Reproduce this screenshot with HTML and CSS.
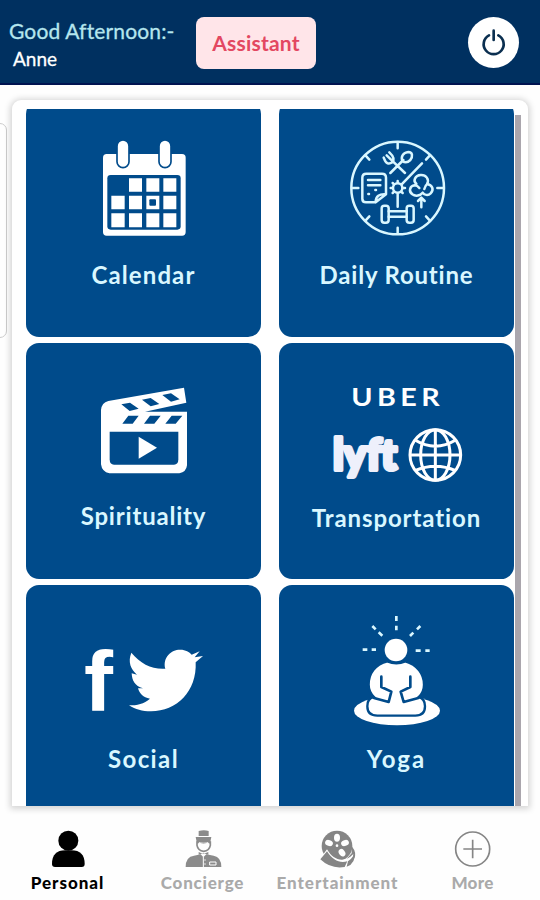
FILE: index.html
```html
<!DOCTYPE html>
<html lang="en">
<head>
  <meta charset="UTF-8">
  <meta name="viewport" content="width=device-width, initial-scale=1.0">
  <title>Personal</title>
  <link rel="stylesheet" href="styles.css">
</head>
<body>
<header class="header">
  <div class="greeting">
    <div class="hello">Good Afternoon:-</div>
    <div class="name">Anne</div>
  </div>
  <button class="assistant">Assistant</button>
  <button class="power" aria-label="Log out">
    <svg width="51" height="51" viewBox="0 0 153 153" fill="none" stroke="#0b2f50" stroke-width="8" stroke-linecap="round">
      <path d="M63 55 A30 30 0 1 0 91 55 M77 41 V69"/>
    </svg>
  </button>
</header>

<main class="main">
  <div class="side-card"></div>
  <div class="panel">
    <div class="scroll">
      <div class="grid">
        <div class="tile">
          <svg class="icon" viewBox="-162 -57 705 465">
            <rect x="69" y="102" width="248" height="245" rx="11"/>
            <rect class="cut" x="82" y="165" width="220" height="164" rx="10"/>
            <g class="pin">
              <rect x="111" y="60" width="36" height="83" rx="18"/>
              <rect x="237" y="60" width="36" height="83" rx="18"/>
            </g>
            <path d="M147 175h39v40h-39z M199 175h39v40h-39z M250 175h39v40h-39z M94 227h40v41H94z M147 227h39v41h-39z M199 227h39v41h-39z M250 227h39v41h-39z M94 280h40v42H94z M147 280h39v42h-39z M199 280h39v42h-39z M250 280h39v42h-39z"/>
            <rect class="cut" x="208" y="238" width="20" height="19" rx="3"/>
          </svg>
          <span class="label calendar">Calendar</span>
        </div>

        <div class="tile">
          <svg class="icon line" viewBox="-93 -57 705 465">
            <circle cx="263" cy="204" r="139"/>
            <path d="M263 68v17 M263 323v17 M127 204h18 M382 204h18 M167 107l11 12 M359 107l-11 12 M167 301l11-12 M359 301l-11-12"/>
            <!-- fork and spoon -->
            <path d="M241 159l39-39 M285 159l-45-43 M222 115c6 17 15 19 25 12c7-9 3-19-9-30 M222 115l-1-2 M230 106l13 13"/>
            <path d="M277 123c-5-13 2-25 18-27c13 0 14 13 6 24c-8 8-16 9-24 3z"/>
            <!-- notes -->
            <path d="M197 247h-29q-11 0-11-11v-63q0-12 12-12h47q12 0 12 12v50l-31 24c0-18 11-26 31-24 M174 180h37 M174 196h37 M175 222h2 M196 210h2"/>
            <!-- clock hands -->
            <circle cx="263" cy="204" r="14"/>
            <path d="M275 193l61-63 M263 221v39 M263 183v5 M242 204h5 M279 204h6 M248 189l4 4 M248 219l4-4 M278 219l-4-4"/>
            <!-- tree -->
            <path d="M319 191c-11-8-4-25 13-26c16-1 27 13 19 27c16 2 22 17 11 28c-8 8-19 5-24-2c-7 9-21 12-31 5c-12-9-8-25 7-27c4 0 10 3 14 8 M343 207c2-7 5-12 8-14"/>
            <path d="M334 262v-27 M324 243l10-10 10 10"/>
            <!-- dumbbell -->
            <rect x="215" y="257" width="21" height="51" rx="8"/>
            <rect x="290" y="257" width="21" height="51" rx="8"/>
            <path d="M236 274h54 M236 290h54"/>
          </svg>
          <span class="label routine">Daily Routine</span>
        </div>

        <div class="tile">
          <svg class="icon" viewBox="-132 -81 705 465">
            <path d="M115 93L342 53l7 45-124 27h126v161q-2 20-23 24H118q-22-4-25-27V120q2-22 22-27z"/>
            <path class="cut" d="M154 103l26-5 26 18-27 7z M216 89l26-5 26 18-26 7z M277 75l26-5 26 18-26 7z M175 137h31l-18 24h-31z M240 137h32l-19 24h-31z M305 137h32l-20 24h-31z"/>
            <path class="cut" d="M119 185h206v83q0 16-13 16H132q-13 0-13-16z"/>
            <path d="M206 200l55 33-55 33z"/>
          </svg>
          <span class="label spirituality">Spirituality</span>
        </div>

        <div class="tile">
          <svg class="icon" viewBox="-63 -81 705 465">
            <text class="uber" x="154" y="107" textLength="278" lengthAdjust="spacingAndGlyphs">UBER</text>
            <text class="lyft" x="99" y="299" textLength="192" lengthAdjust="spacingAndGlyphs">lyft</text>
            <g fill="none" stroke="#fff" stroke-width="9">
              <circle cx="406" cy="255" r="76"/>
              <ellipse cx="406" cy="255" rx="44" ry="76"/>
              <path d="M406 179v152 M330 255h152 M345 210q61 37 122 0 M345 302q61-27 122 0"/>
            </g>
          </svg>
          <span class="label transportation">Transportation</span>
        </div>

        <div class="tile">
          <svg class="icon" viewBox="-132 -135 705 465">
            <text class="facebook" x="42" y="244" textLength="87" lengthAdjust="spacingAndGlyphs">f</text>
            <path d="M184 68c27 33 63 51 102 48c-9-35 20-58 45-57c16 0 27 7 34 15l24-10-15 18 25-4-22 19c4 87-57 147-134 147c-27 0-46-6-66-18c24 0 45-4 63-20c-21-3-31-15-36-31h15c-25-7-33-24-34-45l16 4c-19-17-28-38-17-66z"/>
          </svg>
          <span class="label social">Social</span>
        </div>

        <div class="tile">
          <svg class="icon" viewBox="-153 -45 705 465">
            <g class="rays">
              <path d="M199 48v15 M199 77v14 M127 78l10 10 M146 97l11 10 M271 78l-10 10 M250 98l-10 10 M98 149h14 M125 149h13 M257 152h15 M286 152h13"/>
            </g>
            <circle cx="198" cy="150" r="34"/>
            <ellipse cx="201" cy="332" rx="129" ry="44"/>
            <path class="edge" d="M172 184q27 12 54 0c36 10 56 39 56 70c0 20-6 28-16 37c17 4 19 16 19 28c0 20-12 28-29 28H142c-19 0-30-10-30-28c0-14 5-26 20-28c-10-10-16-20-16-37c0-34 20-61 56-70z"/>
            <path class="fold" d="M154 230v31l30 14-8 31-44-12 M241 230v31l-29 14 9 31 44-12"/>
          </svg>
          <span class="label yoga">Yoga</span>
        </div>
      </div>
      <div class="scrollbar"></div>
    </div>
  </div>
</main>

<nav class="nav">
  <a class="nav-item active">
    <svg width="40" height="40" viewBox="0 0 120 120" fill="currentColor">
      <circle cx="61" cy="32" r="30"/>
      <path d="M12 102q0-41 40-41h18q40 0 40 41 0 9-9 9H21q-9 0-9-9z"/>
    </svg>
    <span class="nav-personal">Personal</span>
  </a>
  <a class="nav-item">
    <svg width="40" height="40" viewBox="0 0 120 120" fill="#8b8b8b">
      <path d="M47 3q16-5 30 0v15H47z M38 21h47l-3 15H41z"/>
      <path d="M42 34v12c2 11 10 17 20 18c10-1 18-7 20-18V34" fill="none" stroke="#8b8b8b" stroke-width="5"/>
      <path d="M42 34q19 13 40 0v7q-20-8-40 0z M47 66l14 6 15-6v8l-15-4-14 4z"/>
      <path d="M8 111q0-31 25-34l20-4 8 9 9-9 22 4q23 4 23 34z"/>
      <path d="M61 81v30 M80 96h19v9H80z" stroke="#fff" stroke-width="3" fill="none"/>
      <circle cx="66" cy="90" r="2" fill="#fff"/>
      <circle cx="66" cy="102" r="2" fill="#fff"/>
    </svg>
    <span class="nav-concierge">Concierge</span>
  </a>
  <a class="nav-item">
    <svg width="40" height="40" viewBox="0 0 120 120" fill="#858585">
      <circle cx="57" cy="48" r="46"/>
      <path d="M101 48q17 22 7 38l-12 14-10-14 15-16z"/>
      <g fill="#fff">
        <ellipse cx="57" cy="23" rx="9" ry="12"/>
        <ellipse cx="81" cy="39" rx="12" ry="9" transform="rotate(-18 81 39)"/>
        <ellipse cx="72" cy="68" rx="9" ry="12" transform="rotate(-36 72 68)"/>
        <ellipse cx="33" cy="39" rx="12" ry="9" transform="rotate(18 33 39)"/>
        <circle cx="57" cy="47" r="4"/>
      </g>
      <path d="M5 88L27 58C44 88 72 98 97 80l9-8q0 24-20 37Q38 122 5 88z" fill="#fff"/>
      <path d="M7 88L27 64C44 92 66 100 88 94l-8 17Q38 118 7 88z"/>
      <path d="M86 110q28-9 24-44-4 18-20 28z"/>
    </svg>
    <span class="nav-entertainment">Entertainment</span>
  </a>
  <a class="nav-item">
    <svg width="40" height="40" viewBox="0 0 120 120" fill="none" stroke="#858585" stroke-width="5">
      <circle cx="59" cy="57" r="51"/>
      <path d="M59 29v56 M31 57h56"/>
    </svg>
    <span class="nav-more">More</span>
  </a>
</nav>
</body>
</html>
```
FILE: styles.css
```css
:root {
  --navy: #003060;
  --blue: #004b8b;
  --pale: #d9f7ff;
}

* {
  box-sizing: border-box;
}

body {
  margin: 0;
  height: 900px;
  display: flex;
  flex-direction: column;
  overflow: hidden;
  background: #fefefe;
  font-family: Lato, 'Liberation Sans', sans-serif;
}

button {
  border: none;
  padding: 0;
  font-family: inherit;
}

.header {
  height: 85px;
  flex: none;
  display: flex;
  align-items: flex-start;
  padding: 17px 21px 0 9px;
  background: var(--navy);
  border-bottom: 2px solid #001350;
}

.greeting {
  width: 187px;
  white-space: nowrap;
}

.hello {
  color: #b5e6ee;
  font-size: 21px;
  line-height: 28px;
  letter-spacing: 0.15px;
  -webkit-text-stroke: 0.3px #b5e6ee;
}

.name {
  padding-left: 4px;
  color: #fff;
  font-size: 19px;
  line-height: 28px;
  -webkit-text-stroke: 0.3px #fff;
}

.assistant {
  width: 120px;
  height: 52px;
  padding-bottom: 2px;
  border-radius: 8px;
  background: #ffe5e9;
  color: #e34861;
  font-size: 21px;
  font-weight: 700;
  letter-spacing: 0.2px;
}

.power {
  width: 51px;
  height: 51px;
  margin-left: auto;
  border-radius: 50%;
  background: #fff;
}

.power svg {
  display: block;
}

.main {
  position: relative;
  height: 721px;
  flex: none;
  padding: 15px 12px 0;
}

/* edge of the neighbouring page */
.side-card {
  position: absolute;
  left: -20px;
  top: 38px;
  width: 27px;
  height: 215px;
  border: 1px solid #ccc;
  border-radius: 7px;
}

.panel {
  position: relative;
  height: 706px;
  padding: 9px 7px 0 14px;
  border-radius: 9px 9px 0 0;
  background: #fff;
  box-shadow: 0 1px 6px 2px rgba(0, 0, 0, 0.17);
}

.scroll {
  display: flex;
  height: 697px;
  overflow: hidden;
}

.grid {
  display: grid;
  grid-template-columns: 235px 235px;
  grid-auto-rows: 236px;
  gap: 6px 18px;
  margin-top: -8px;
}

.scrollbar {
  width: 6px;
  margin: 6px 0 0 1px;
  background: #aaa6ad;
}

.tile {
  display: flex;
  flex-direction: column;
  align-items: center;
  border-radius: 13px;
  background: var(--blue);
}

.icon {
  width: 235px;
  height: 155px;
  fill: #fff;
}

.icon .cut {
  fill: var(--blue);
}

.icon .pin {
  stroke: var(--blue);
  stroke-width: 5;
}

.icon.line {
  fill: none;
  stroke: var(--pale);
  stroke-width: 7.5;
  stroke-linecap: round;
  stroke-linejoin: round;
}

.icon .rays {
  stroke: var(--pale);
  stroke-width: 8;
}

.icon .edge {
  stroke: var(--blue);
  stroke-width: 7;
}

.icon .fold {
  fill: none;
  stroke: var(--blue);
  stroke-width: 8;
  stroke-linecap: round;
  stroke-linejoin: round;
}

.uber {
  font-size: 72px;
  font-weight: 700;
  letter-spacing: 11px;
}

.lyft {
  fill: #eef0fb;
  stroke: #eef0fb;
  stroke-width: 12;
  stroke-linejoin: round;
  font-size: 132px;
  font-weight: 900;
}

.facebook {
  font-family: 'Liberation Sans', sans-serif;
  font-size: 254px;
  font-weight: 700;
}

.label {
  color: var(--pale);
  font-size: 24px;
  font-weight: 700;
  line-height: 36px;
  letter-spacing: 0.7px;
  white-space: nowrap;
}

.calendar {
  padding-top: 1px;
  letter-spacing: 1.1px;
}

.routine {
  padding-top: 1px;
  letter-spacing: 0.8px;
}

.spirituality {
  letter-spacing: 0.8px;
}

.transportation {
  padding-top: 2px;
  letter-spacing: 0.9px;
}

.social {
  padding-top: 1px;
  letter-spacing: 1.4px;
}

.yoga {
  padding-top: 1px;
  letter-spacing: 2px;
}

.nav {
  display: grid;
  grid-template-columns: repeat(4, 1fr);
  padding-top: 24px;
}

.nav-item {
  display: flex;
  flex-direction: column;
  align-items: center;
  color: #aaa;
  font-size: 17px;
  font-weight: 900;
  line-height: 24px;
}

.nav-item svg {
  margin-bottom: 1px;
}

.nav-item.active {
  color: #000;
}

.nav-personal,
.nav-entertainment {
  letter-spacing: 0.95px;
}

.nav-concierge {
  letter-spacing: 0.75px;
}

.nav-more {
  letter-spacing: 0.3px;
}
```
